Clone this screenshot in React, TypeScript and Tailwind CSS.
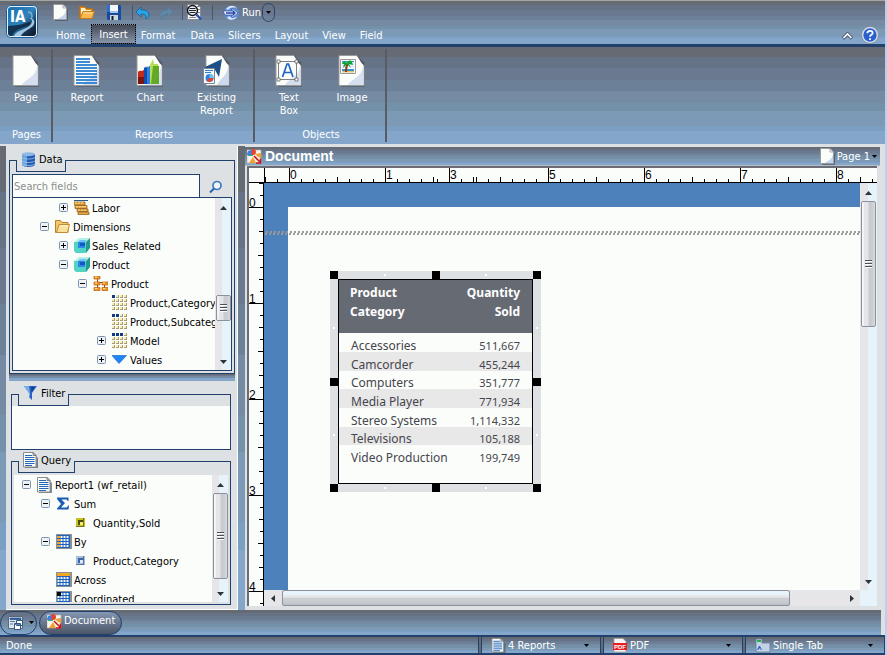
import type { ReactNode } from "react";

const BANDS =
  "bg-[linear-gradient(to_bottom,#666a72_0_10%,#667386_10%_22%,#6b7990_22%_34%,#6c8197_34%_45%,#758ba3_45%_58%,#7391a9_58%_66%,#7c9ab6_66%_81%,#7a9fc3_81%_87%,#84a6ca_87%_100%)]";

/* ---------- icons ---------- */

function Sheet({ children }: { children?: ReactNode }) {
  return (
    <svg width="28" height="32" viewBox="0 0 28 32" aria-hidden="true">
      <path d="M3 2h18l6 7v23H3z" fill="#4c5563" opacity=".55" />
      <path d="M1 .5h17.5L26 8v22.5H1z" fill="#fbfdfb" stroke="#9a9a9a" />
      <path d="M10 30C15 22 23 24 25.500 10v20z" fill="#d5dfef" />
      <path d="M18.500 0 26.500 8v3l-3-3z" fill="#50555e" />
      <path d="M18.500.5v8H23z" fill="#fff" />
      {children}
    </svg>
  );
}

function ReportIcon() {
  return (
    <Sheet>
      <path
        d="M3 4h14M3 7h14M3 10h21M3 13h21M3 16h21M3 19h21M3 22h21M3 25h21M3 28h21"
        stroke="#2a7fd0"
        strokeWidth="2"
        shapeRendering="crispEdges"
        opacity=".9"
      />
    </Sheet>
  );
}

function ChartIcon() {
  return (
    <Sheet>
      <path d="M2 17l2-2h5v14H2z" fill="#c62a1e" />
      <path d="M2 22h7v7H2z" fill="#7c1410" />
      <path d="M8 13l2-2h5v18H8z" fill="#2f7fe0" />
      <path d="M8 13h3v16H8z" fill="#0d4fae" />
      <path d="M14 10l3-6 1 5h4v20h-8z" fill="#b4de5a" />
      <path d="M17 11h6v18h-8z" fill="#63a826" />
      <path d="M3 15h4v1H3zM9 11h4v1H9z" fill="#f0d8c8" />
    </Sheet>
  );
}

function ExistingIcon() {
  return (
    <svg width="28" height="32" viewBox="0 0 28 32" aria-hidden="true">
      <path d="M5 2h16l6 7v23H5z" fill="#4c5563" opacity=".55" />
      <path d="M3 .5h15.500L26 8v22.500H3z" fill="#fbfdfb" stroke="#9a9a9a" />
      <path d="M14 30C18 22 24 22 25.500 10v20z" fill="#cddaee" />
      <path d="M18.500 0 26.500 8v3l-3-3z" fill="#50555e" />
      <path d="M2 12 19 4l-3 18-4-7-7 2z" fill="#1d4f86" />
      <path d="M.5 13.500h11v15H.5z" fill="#f4f8fb" stroke="#7b8694" />
      <path d="M2 15.500h8M2 17.500h6" stroke="#2f80cc" />
      <circle cx="6.500" cy="23" r="4" fill="#2f7fe0" />
      <path d="M6.500 23V19a4 4 0 0 1 4 4z" fill="#6fc3ef" />
      <path d="M6.500 23h4a4 4 0 0 1-7 2.500z" fill="#e0442a" />
    </svg>
  );
}

function TextBoxIcon() {
  return (
    <Sheet>
      <path d="M3.500 6.500h18v18h-18z" fill="none" stroke="#7f7f7f" />
      <path d="M2 5h3v3H2zM20 5h3v3h-3zM2 23h3v3H2zM20 23h3v3h-3z" fill="#fff" stroke="#666" strokeWidth=".8" />
      <path d="M7.500 22 12 9h1.500L18 22M9 17.500h7.500" fill="none" stroke="#1f62c4" strokeWidth="1.700" />
    </Sheet>
  );
}

function PictureIcon() {
  return (
    <Sheet>
      <path d="M2.500 4.500h15v14h-15z" fill="#fff" stroke="#9a9a9a" />
      <path d="M4 6h12v7H4z" fill="#dff0fa" />
      <path d="M4 6h12v1H4zM4 14h12v2H4z" fill="#2f95d8" />
      <path d="M4 16h12v1.500H4z" fill="#e3c267" />
      <path d="M8 17c0-4 .5-6 1.500-9" fill="none" stroke="#8d3d15" strokeWidth="2.200" />
      <path d="M4 9c1-3 3-3 5-1 1-3 4-3 5-1l1 3-4-1 2 4-4-4-4 4 1-4z" fill="#12a238" />
    </Sheet>
  );
}

function AppLogo() {
  return (
    <svg width="33" height="34" viewBox="0 0 33 34" aria-hidden="true">
      <defs>
        <linearGradient id="logo" x1="0" y1="0" x2="1" y2="1">
          <stop offset="0" stopColor="#1c6fae" />
          <stop offset=".5" stopColor="#2e83bd" />
          <stop offset=".75" stopColor="#173554" />
          <stop offset="1" stopColor="#0a1727" />
        </linearGradient>
      </defs>
      <rect x=".5" y=".5" width="31" height="32" rx="4" fill="#e8eff5" stroke="#1d5b96" />
      <rect x="2" y="2" width="28" height="29" rx="3" fill="url(#logo)" />
      <path d="M2 21c7-1 13-1 18-3 4-2 6 0 3 2-6 3-14 4-17 11H5c-2 0-3-1-3-3z" fill="#0d2136" opacity=".8" />
      <path d="M8 31c2-6 14-7 17-12 2-3 1-5-2-6 5 0 7 4 4 8-4 4-10 5-12 10z" fill="#9fc4df" />
      <path d="M22 7c4 0 5 4 3 7" fill="none" stroke="#7db1d6" strokeWidth="1.500" />
      <text x="4" y="17" fontSize="15" fontWeight="700" fill="#fff" className="font-['DejaVu_Sans_Condensed','Noto_Sans',sans-serif]">
        IA
      </text>
    </svg>
  );
}

function MiniPage() {
  return (
    <svg width="15" height="17" viewBox="0 0 15 17" aria-hidden="true">
      <path d="M2 2h9l4 4v11H2z" fill="#3f4a5a" opacity=".6" />
      <path d="M.5.5h9.500l3.500 3.500v11.500H.5z" fill="#fbfdfb" stroke="#9c9c9c" />
      <path d="M5 15c3-3 7-3 8-9v9z" fill="#c4d6ee" />
      <path d="M10 .5V4h3.500z" fill="#fff" stroke="#777" strokeWidth=".6" />
    </svg>
  );
}

function LinesPage({ tall = false }: { tall?: boolean }) {
  return (
    <svg width="15" height={tall ? 16 : 15} viewBox="0 0 15 16" aria-hidden="true">
      <path d="M2 2h9l4 4v10H2z" fill="#4f5866" opacity=".7" />
      <path d="M.5.5h9.500l3 3v11.500H.5z" fill="#fbfdfb" stroke="#8c8c8c" />
      <path d="M2 3.500h7M2 5.500h9.500M2 7.500h9.500M2 9.500h9.500M2 11.500h9.500M2 13.500h7" stroke="#2468b8" />
      <path d="M10 .5v3h3z" fill="#d8dde3" stroke="#555" strokeWidth=".7" />
    </svg>
  );
}

function OpenFolder() {
  return (
    <svg width="16" height="15" viewBox="0 0 16 15" aria-hidden="true">
      <path d="M.5 1.500h5l1.500 2h6.500v10H.5z" fill="#d98a1c" stroke="#b86f12" />
      <path d="M2 3h4l1 2h5v2H4l-2 5z" fill="#fff2c4" />
      <path d="M1 13.500 4 6.500h11.500l-2.500 7z" fill="#fbb850" stroke="#c57d18" />
      <path d="M4.800 8h8.700" stroke="#ffe2a3" />
    </svg>
  );
}

function TreeFolder() {
  return (
    <svg width="15" height="15" viewBox="0 0 15 15" aria-hidden="true">
      <path d="M.5 1.500h5l1.500 2h6v10H.5z" fill="#f1c66c" stroke="#b9812a" />
      <path d="M1.500 13.500 4 5.500h10.500l-2 8z" fill="#fbe09a" stroke="#c48c34" />
      <path d="M5 7h8" stroke="#fff6d6" />
    </svg>
  );
}

function SaveIcon() {
  return (
    <svg width="14" height="15" viewBox="0 0 14 15" aria-hidden="true">
      <path d="M0 0h13l1 1v14H1L0 14z" fill="#174a9c" />
      <path d="M0 0h3v7H0z" fill="#2f6fcf" />
      <path d="M3 0h8v7H3z" fill="#f4f8fb" />
      <path d="M3 6h8v2H3z" fill="#9fc3ea" />
      <path d="M3 10h8v5H3z" fill="#cfd5dc" />
      <path d="M4.500 11h2v4h-2z" fill="#111c33" />
    </svg>
  );
}

function UndoIcon({ faded = false }: { faded?: boolean }) {
  return (
    <svg width="14" height="12" viewBox="0 0 14 12" aria-hidden="true" className={faded ? "-scale-x-100" : ""}>
      <path
        d="M5 0v3c5-.5 8 2 8 5 0 2-1 3.500-3.500 4C11 9 9.500 7 5 7v3L0 5z"
        fill={faded ? "#5f87a8" : "#29a3e6"}
        stroke={faded ? "#587a98" : "#0c5c98"}
        strokeWidth=".7"
      />
    </svg>
  );
}

function PreviewIcon() {
  return (
    <svg width="17" height="17" viewBox="0 0 17 17" aria-hidden="true">
      <path d="M1.500.5h10l3 3v12h-13z" fill="#f8fafb" stroke="#8a8a8a" />
      <path d="M11 2.500h2M12 5.500h2M12 8.500h2M3 13.500h7" stroke="#888" />
      <circle cx="6.500" cy="6.500" r="5" fill="#e6f1f8" stroke="#10131a" strokeWidth="1.400" />
      <path d="M3.500 4.500h6M3 6.500h7M3.500 8.500h6" stroke="#222" />
      <path d="m10.500 10.500 4.500 5" stroke="#264fb4" strokeWidth="2.400" />
    </svg>
  );
}

function RunIcon() {
  return (
    <svg width="17" height="16" viewBox="0 0 17 16" aria-hidden="true" className="shrink-0">
      <ellipse cx="8.500" cy="8" rx="7.500" ry="7" fill="#5d8fdc" />
      <path d="M3 4c3-4 8-4 11-1-4-1-7-.5-9 2zM4 13c3 3 8 2 10-1-3 1-6 1-8-1z" fill="#d3e4fa" />
      <path d="M0 6h9V3l6 5-6 5v-3H2z" fill="#f0f5fc" stroke="#2a4c9f" strokeWidth=".7" />
      <path d="M3 8h8M9.500 5.500 12 8l-2.500 2.500" fill="none" stroke="#2340a8" strokeWidth="1.400" />
    </svg>
  );
}

function HelpIcon() {
  return (
    <svg width="18" height="18" viewBox="0 0 17 17" aria-hidden="true">
      <circle cx="8.500" cy="8.500" r="8" fill="#dfe5ee" stroke="#7b8798" strokeWidth=".8" />
      <circle cx="8.500" cy="8.500" r="6.300" fill="#2b5fd0" />
      <path d="M6 6.800c0-3 5-3 5-.3 0 1.800-2.500 1.700-2.500 3.700M8.500 11.600v1.600" fill="none" stroke="#fff" strokeWidth="1.700" />
    </svg>
  );
}

function DocIcon() {
  return (
    <svg width="15" height="15" viewBox="0 0 15 15" aria-hidden="true">
      <path d="M0 1h14v13H0z" fill="#f7f3ea" stroke="#b9b2a4" strokeWidth=".6" />
      <path d="m2 14 4-6 3 6zM8 5l6-1v5l-3-1z" fill="#f0a02c" />
      <path d="M0 4a4 4 0 0 1 6 3H1z" fill="#2dad72" />
      <circle cx="6" cy="3" r="3" fill="#e6432c" />
      <path d="M1 2 5 1 4 6H0z" fill="#3d82e0" />
      <path d="m7 7 6 6M13.500 9.500v4.500H9" fill="none" stroke="#c4181c" strokeWidth="1.600" />
    </svg>
  );
}

function DatabaseIcon() {
  return (
    <svg width="15" height="15" viewBox="0 0 15 15" aria-hidden="true">
      <path d="M1 2v11c2 2.500 11 2.500 13 0V2z" fill="#1f5bb4" />
      <path d="M1 2v11c1 1 3 1.700 5 1.800V2z" fill="#69a4de" />
      <path d="M1 5.500c3 2 10 2 13 0M1 9c3 2 10 2 13 0M1 12c3 2 10 2 13 0" fill="none" stroke="#a9c9ea" strokeWidth=".8" />
      <ellipse cx="7.500" cy="2.200" rx="6.500" ry="2" fill="#8fb9e4" />
    </svg>
  );
}

function FunnelIcon() {
  return (
    <svg width="15" height="16" viewBox="0 0 15 16" aria-hidden="true">
      <path d="M1 1h13L9 8v7l-3-3V8z" fill="#2a62c0" />
      <path d="M1 1h5l1 7v4l-1-1V8z" fill="#78aeea" />
      <path d="M8 2h4L8.500 7z" fill="#123f92" />
    </svg>
  );
}

function LensIcon() {
  return (
    <svg width="14" height="14" viewBox="0 0 14 14" aria-hidden="true">
      <circle cx="8" cy="5.500" r="4" fill="#eef5fb" stroke="#3d78bd" strokeWidth="1.700" />
      <path d="M5 8.500 1 12.500" stroke="#2f66aa" strokeWidth="2.200" />
    </svg>
  );
}

function LaborIcon() {
  return (
    <svg width="16" height="15" viewBox="0 0 16 15" aria-hidden="true">
      <path d="M0 .5h14" stroke="#275a8c" />
      <path d="M0 2h11v3H0zM1 5.500h12v3H1zM3 9h11v2.500H3zM4 12h11v2.500H4z" fill="#e8aa42" stroke="#8a5413" strokeWidth=".7" />
      <path d="M1 3h9M2 6.500h10M4 10h9" stroke="#fbdc92" strokeDasharray="2 1" />
    </svg>
  );
}

function CubeIcon() {
  return (
    <svg width="16" height="15" viewBox="0 0 16 15" aria-hidden="true">
      <path d="M0 4 5 0h11l-4 4z" fill="#b4f0e6" />
      <path d="M12 4l4-4v10l-4 5z" fill="#1f9c90" />
      <path d="M0 4h12v11H2l-2-2z" fill="#52d3c4" />
      <path d="M4 4h7v6H4z" fill="#2b86ea" />
      <path d="M6 5h5v3H6z" fill="#1556c0" />
      <path d="M4 4 6 2h7l-2 2z" fill="#6fc0f4" />
    </svg>
  );
}

function HierarchyIcon() {
  return (
    <svg width="15" height="15" viewBox="0 0 15 15" aria-hidden="true">
      <path d="M4.500 2v11M4.500 6.500h7v7" fill="none" stroke="#7a4c1a" />
      <path d="M1 0h6v3H1zM1 6h6v3H1zM1 11.500h6v3H1zM9 6h6v3H9zM9 11.500h6v3H9z" fill="#f29a22" stroke="#b85a10" strokeWidth=".7" />
      <path d="M2 1h2M2 7h2M2 12.500h2M10 7h2M10 12.500h2" stroke="#ffe69a" />
    </svg>
  );
}

function DotGrid({ marked = 0 }: { marked?: number }) {
  const cells = Array.from({ length: 16 }, (_, i) => i);
  return (
    <svg width="15" height="15" viewBox="0 0 15 15" aria-hidden="true">
      {cells.map((i) => (
        <g key={i}>
          <rect x={(i % 4) * 4} y={Math.floor(i / 4) * 4} width="3" height="3" fill={i < marked ? "#123a80" : "#a89c74"} />
          {i >= marked && <rect x={(i % 4) * 4} y={Math.floor(i / 4) * 4} width="2" height="2" fill="#f7efb4" />}
        </g>
      ))}
    </svg>
  );
}

function ValuesIcon() {
  return (
    <svg width="15" height="15" viewBox="0 0 15 15" aria-hidden="true">
      <path d="M0 3.500h14.500L7 11.500z" fill="#1b86f8" stroke="#1258b8" strokeWidth=".6" />
    </svg>
  );
}

function SigmaIcon() {
  return (
    <svg width="15" height="15" viewBox="0 0 15 15" aria-hidden="true">
      <path d="M1 1.500h11.500V5h-1c0-1-.5-1.500-2-1.500H5.500L9 7l-4 4.500h4.500c1.500 0 2-.5 2.500-2h1l-.5 4H1v-1L5 8 1 3z" fill="#1c5cb4" />
    </svg>
  );
}

function Bullet({ tone }: { tone: "gold" | "blue" }) {
  return (
    <svg width="15" height="15" viewBox="0 0 15 15" aria-hidden="true">
      <path d="M1 3h9v9H1z" fill={tone === "gold" ? "#c8c21a" : "#a9bdd8"} />
      <path d="M9 3v9H1v-1h7V3z" fill={tone === "gold" ? "#77711a" : "#56719a"} />
      <path d="M3 5h5v5H3z" fill={tone === "gold" ? "#4b4a12" : "#3c6aa8"} />
      <path d="M5 7h3v3H5z" fill={tone === "gold" ? "#f4ef6c" : "#dbe8f6"} />
    </svg>
  );
}

function TableIcon({ kind }: { kind: "by" | "across" | "coord" }) {
  return (
    <svg width="16" height="15" viewBox="0 0 16 15" aria-hidden="true">
      <path d="M0 0h16v15H0z" fill="#8b8f96" />
      <path d="M1 1h13v13H1z" fill="#1f62bd" />
      {[0, 1, 2, 3].map((r) => (
        <path key={r} d={`M1.500 ${r * 3 + 3}h12`} stroke="#eef5fb" strokeWidth="1.800" strokeDasharray="2 1" />
      ))}
      {kind === "by" && <path d="M1.500 3h3M1.500 6h3M1.500 9h3M1.500 12h3" stroke="#f5a623" strokeWidth="2" />}
      {kind === "across" && <path d="M1 1h13v3H1z" fill="#f5a623" />}
      {kind === "coord" && <path d="M1 1h4v4H1z" fill="#0b0b0b" />}
    </svg>
  );
}

function Caret() {
  return (
    <svg width="5" height="3" viewBox="0 0 5 3" aria-hidden="true" className="pointer-events-none">
      <path d="M0 0h5L2.500 3z" fill="#000" />
    </svg>
  );
}

function PdfIcon() {
  return (
    <svg width="15" height="15" viewBox="0 0 15 15" aria-hidden="true">
      <path d="M1 .5h9l3 3V14H1z" fill="#f8f6f6" stroke="#9c9c9c" strokeWidth=".8" />
      <path d="M0 5h14v7H0z" fill="#e81c1c" />
      <text x="1" y="11" fontSize="6" fontWeight="700" fill="#fff" className="font-['Liberation_Sans',sans-serif]">
        PDF
      </text>
    </svg>
  );
}

function TabIcon() {
  return (
    <svg width="16" height="15" viewBox="0 0 16 15" aria-hidden="true">
      <path d="M1 1h6v4h8v9H1z" fill="#c2d3e6" stroke="#6c7c90" strokeWidth=".8" />
      <path d="M2 2h4v2H2z" fill="#1fb44b" />
      <path d="M2 12l2-4h1l2 4H6l-1-2-2 2z" fill="#2b62c0" />
    </svg>
  );
}

function WindowsIcon() {
  return (
    <svg width="17" height="16" viewBox="0 0 17 16" aria-hidden="true">
      <path d="M.5 1.500h14v12H.5z" fill="#dfe6ee" stroke="#58687c" />
      <path d="M2 3h11v1.500H2zM2 6.500h5M2 9h3" fill="#2f5c94" stroke="#2f5c94" strokeWidth=".8" />
      <path d="M8.500 5.500h6v5h-6zM6.500 8.500h6v6h-6z" fill="#fff" stroke="#33557f" />
      <path d="M7 9.500h5" stroke="#5d86b8" />
    </svg>
  );
}

/* ---------- scrollbars ---------- */

function VScroll({ before, thumb, wide = false }: { before: string; thumb: string; wide?: boolean }) {
  return (
    <div
      className={`flex shrink-0 flex-col items-center bg-[linear-gradient(to_right,#e6e6e8_0_45%,#e6f3fb_45%_100%)] ${wide ? "w-[17px] px-px" : "w-4"}`}
    >
      <div className={`flex w-full shrink-0 justify-center pt-2 ${before}`}>
        <svg width="7" height="4" viewBox="0 0 7 4" aria-hidden="true">
          <path d="M3.500 0 7 4H0z" fill="#2e343c" />
        </svg>
      </div>
      <div
        className={`flex w-[15px] shrink-0 items-center justify-center rounded-xs border border-[#8d9199] bg-[linear-gradient(to_right,#f4f4f6_0_15%,#e4e5e8_15%_45%,#c9cbcf_55%_75%,#dadbde)] ${thumb}`}
      >
        <svg width="7" height="8" viewBox="0 0 7 8" aria-hidden="true">
          <path d="M0 .5h7M0 3.500h7M0 6.500h7" stroke="#4a5058" />
          <path d="M0 1.500h7M0 4.500h7M0 7.500h7" stroke="#fff" />
        </svg>
      </div>
      <div className="flex w-full flex-1 items-end justify-center pb-[6px]">
        <svg width="7" height="4" viewBox="0 0 7 4" aria-hidden="true">
          <path d="M0 0h7L3.500 4z" fill="#2e343c" />
        </svg>
      </div>
    </div>
  );
}

function HScroll() {
  return (
    <div className="flex h-4 bg-[#e6e6e8]">
      <div className="flex w-[18px] items-center justify-center">
        <svg width="4" height="7" viewBox="0 0 4 7" aria-hidden="true">
          <path d="M4 0v7L0 3.500z" fill="#2e343c" />
        </svg>
      </div>
      <div className="w-[508px] rounded-xs border border-[#8d9199] bg-[linear-gradient(to_bottom,#e8f4fb_0_30%,#e6e6e8_30%_45%,#cbcdd0_50%_75%,#b9bfc8)]" />
      <div className="flex flex-1 items-center justify-end pr-[6px]">
        <svg width="4" height="7" viewBox="0 0 4 7" aria-hidden="true">
          <path d="M0 0v7l4-3.500z" fill="#2e343c" />
        </svg>
      </div>
      <div className="w-[17px] bg-[#e6f3fb]" />
    </div>
  );
}

/* ---------- top area ---------- */

const tabs = ["Home", "Insert", "Format", "Data", "Slicers", "Layout", "View", "Field"];

function Separator() {
  return <span className="h-[15px] w-px bg-[#4d5563]" />;
}

function Header() {
  return (
    <header className={`flex h-[47px] shrink-0 border-t border-b-[3px] border-t-[#a3a5a3] border-b-[#21406b] ${BANDS}`}>
      <button aria-label="InfoAssist menu" className="ml-[6px] mt-1 h-[34px] w-[33px]">
        <AppLogo />
      </button>
      <div className="flex flex-1 flex-col pl-2">
        <div className="flex h-6 items-center">
          <button aria-label="New" className="flex w-[27px] justify-center"><MiniPage /></button>
          <button aria-label="Open" className="flex w-[25px] justify-center"><OpenFolder /></button>
          <button aria-label="Save" className="mr-1 flex w-[29px] justify-center"><SaveIcon /></button>
          <Separator />
          <button aria-label="Undo" className="flex w-5 justify-center"><UndoIcon /></button>
          <button aria-label="Redo" className="mr-[3px] flex w-[26px] justify-center"><UndoIcon faded /></button>
          <Separator />
          <button aria-label="Preview" className="mr-[6px] flex w-[23px] justify-center"><PreviewIcon /></button>
          <Separator />
          <button className="ml-[10px] flex w-[39px] items-center gap-[2px]"><RunIcon /><span className="pt-px">Run</span></button>
          <button aria-label="Run options" className="flex h-[19px] w-[13px] items-center justify-center rounded-full border border-[#2a4468]">
            <Caret />
          </button>
        </div>
        <nav className="flex items-end" aria-label="Ribbon tabs">
          {tabs.map((t) =>
            t === "Insert" ? (
              <button key={t} aria-current="page" className="h-5 border border-dotted border-black bg-linear-to-b from-[#454b58] to-[#8794a9] px-[7px] pt-px leading-[18px]">
                {t}
              </button>
            ) : (
              <button key={t} className={`h-5 pt-[3px] leading-[17px] ${t === "Home" ? "pl-[9px] pr-[6px]" : t === "Format" ? "pl-[5px] pr-2" : "px-[7px]"}`}>
                {t}
              </button>
            ),
          )}
        </nav>
      </div>
      <div className="flex items-end gap-2 pr-[6px]">
        <button aria-label="Collapse ribbon" className="mb-1">
          <svg width="11" height="8" viewBox="0 0 11 8" aria-hidden="true">
            <path d="m1 6.500 4.500-4.500L10 6.500" fill="none" stroke="#4d5a6c" strokeWidth="3.400" />
            <path d="m1.500 6 4-4 4 4" fill="none" stroke="#fff" strokeWidth="1.600" />
          </svg>
        </button>
        <button aria-label="Help"><HelpIcon /></button>
      </div>
    </header>
  );
}

function RibbonButton({ icon, label, width }: { icon: ReactNode; label: string; width: string }) {
  return (
    <button className={`flex flex-col items-center text-center leading-[13px] ${width}`}>
      {icon}
      <span className="mt-1 whitespace-pre-line">{label}</span>
    </button>
  );
}

function RibbonGroup({ title, width, children }: { title: string; width: string; children: ReactNode }) {
  return (
    <section className={`my-[2px] flex shrink-0 flex-col border-r-2 border-[#575c67] ${width}`}>
      <div className="flex flex-1 items-start pl-px pt-[6px]">{children}</div>
      <h2 className="pl-[2px] text-center leading-[14px]">{title}</h2>
    </section>
  );
}

function Ribbon() {
  return (
    <div className={`flex h-[97px] shrink-0 ${BANDS}`}>
      <RibbonGroup title="Pages" width="w-[53px]">
        <RibbonButton icon={<Sheet />} label="Page" width="w-full" />
      </RibbonGroup>
      <RibbonGroup title="Reports" width="w-[202px]">
        <RibbonButton icon={<ReportIcon />} label="Report" width="w-[66px]" />
        <RibbonButton icon={<ChartIcon />} label="Chart" width="w-[60px]" />
        <RibbonButton icon={<ExistingIcon />} label={"Existing\nReport"} width="w-[73px]" />
      </RibbonGroup>
      <RibbonGroup title="Objects" width="w-[132px]">
        <RibbonButton icon={<TextBoxIcon />} label={"Text\nBox"} width="w-[66px]" />
        <RibbonButton icon={<PictureIcon />} label="Image" width="w-[60px]" />
      </RibbonGroup>
    </div>
  );
}

/* ---------- left side ---------- */

const INDENTS = ["pl-[8px]", "pl-[27px]", "pl-[46px]", "pl-[65px]", "pl-[84px]"];

type Node = { level: number; icon: ReactNode; label: string; state?: "open" | "closed" };

function TreeRow({ level, icon, label, state }: Node) {
  return (
    <li className={`flex h-[19px] items-center whitespace-nowrap ${INDENTS[level]}`}>
      {state ? (
        <button aria-label={`${state === "open" ? "Collapse" : "Expand"} ${label}`} className="w-[9px] shrink-0">
          <svg width="9" height="9" viewBox="0 0 9 9" aria-hidden="true">
            <rect x=".5" y=".5" width="8" height="8" rx="1" fill="#eef2f5" stroke="#7d93b0" />
            <path d={state === "open" ? "M2 4.500h5" : "M2 4.500h5M4.500 2v5"} stroke="#000" />
          </svg>
        </button>
      ) : (
        <span className="w-[9px] shrink-0" />
      )}
      <span className="ml-[6px] flex w-4 shrink-0">{icon}</span>
      <span className="ml-[2px] pt-[2px]">{label}</span>
    </li>
  );
}

const fields: Node[] = [
  { level: 2, icon: <LaborIcon />, label: "Labor", state: "closed" },
  { level: 1, icon: <TreeFolder />, label: "Dimensions", state: "open" },
  { level: 2, icon: <CubeIcon />, label: "Sales_Related", state: "closed" },
  { level: 2, icon: <CubeIcon />, label: "Product", state: "open" },
  { level: 3, icon: <HierarchyIcon />, label: "Product", state: "open" },
  { level: 4, icon: <DotGrid marked={1} />, label: "Product,Category" },
  { level: 4, icon: <DotGrid marked={2} />, label: "Product,Subcategory" },
  { level: 4, icon: <DotGrid marked={3} />, label: "Model", state: "closed" },
  { level: 4, icon: <ValuesIcon />, label: "Values", state: "closed" },
];

const query: Node[] = [
  { level: 0, icon: <LinesPage tall />, label: "Report1 (wf_retail)", state: "open" },
  { level: 1, icon: <SigmaIcon />, label: "Sum", state: "open" },
  { level: 2, icon: <Bullet tone="gold" />, label: "Quantity,Sold" },
  { level: 1, icon: <TableIcon kind="by" />, label: "By", state: "open" },
  { level: 2, icon: <Bullet tone="blue" />, label: "Product,Category" },
  { level: 1, icon: <TableIcon kind="across" />, label: "Across" },
  { level: 1, icon: <TableIcon kind="coord" />, label: "Coordinated" },
];

function PanelTab({ icon, label, width }: { icon: ReactNode; label: string; width: string }) {
  return (
    <h2
      className={`-mt-px ml-[6px] flex h-3 shrink-0 items-end gap-[3px] border-x border-b border-[#21406b] bg-[#dde1e3] pb-1 pl-1 leading-[15px] ${width}`}
    >
      {icon}
      {label}
    </h2>
  );
}

function LeftPanel() {
  return (
    <aside className="flex w-[232px] shrink-0 flex-col border-b border-r border-[#fbfdfb] bg-[#dde1e3] pb-1 pl-[3px] pr-[2px] pt-[14px] text-black">
      <section className="flex h-[214px] shrink-0 flex-col border border-[#21406b] pb-[2px]">
        <PanelTab icon={<DatabaseIcon />} label="Data" width="w-[50px]" />
        <div className="mx-[2px] mt-[2px] flex h-[23px] shrink-0">
          <input
            aria-label="Search fields"
            placeholder="Search fields"
            className="w-[188px] border border-b-0 border-[#21406b] bg-[#fbfdfb] px-px pt-px placeholder:text-[#8c8f8c]"
          />
          <button aria-label="Search" className="flex flex-1 items-center justify-center pt-[2px]"><LensIcon /></button>
        </div>
        <div className="mx-[2px] flex min-h-0 flex-1 border border-[#21406b] bg-[#fbfdfb]">
          <ul className="min-w-0 flex-1 overflow-hidden">
            {fields.map((n, i) => <TreeRow key={i} {...n} />)}
          </ul>
          <VScroll before="h-[97px]" thumb="h-[26px]" />
        </div>
      </section>
      <div className="h-[7px] shrink-0 bg-[linear-gradient(to_bottom,#666a72_0_15%,#6b7990_15%_35%,#758ba3_35%_60%,#84a6ca_60%)]" />
      <section className="ml-[2px] mr-1 mt-[13px] flex h-[56px] shrink-0 flex-col border border-[#21406b]">
        <PanelTab icon={<FunnelIcon />} label="Filter" width="w-[51px]" />
        <div className="flex-1 bg-[#fbfdfb]" />
      </section>
      <section className="ml-[2px] mr-1 mt-[11px] flex min-h-0 flex-1 flex-col border border-[#21406b] pb-[2px]">
        <PanelTab icon={<LinesPage tall />} label="Query" width="w-[57px]" />
        <div className="mx-[2px] mt-[2px] flex min-h-0 flex-1 bg-[#fbfdfb]">
          <ul className="min-w-0 flex-1 overflow-hidden">
            {query.map((n, i) => <TreeRow key={i} {...n} />)}
          </ul>
          <VScroll before="h-[18px]" thumb="h-[86px]" />
        </div>
      </section>
    </aside>
  );
}

/* ---------- document ---------- */

const majors: [number, string][] = [[40, "0"], [136, "1"], [200, "3"], [299, "5"], [395, "6"], [491, "7"], [587, "8"]];
const smallTicks = [
  28, 52, 64, 76, 100, 112, 124, 148, 160, 172, 188, 212, 239, 263, 275, 287, 311, 323, 335, 359, 371, 383, 407, 419, 431, 455, 467, 479,
  503, 515, 527, 551, 563, 575, 599, 623,
];
const midTicks = [16, 88, 184, 224, 227, 251, 347, 443, 539, 611];
const vMajors: [number, string][] = [[24, "0"], [120, "1"], [216, "2"], [312, "3"], [408, "4"]];

function TopRuler() {
  return (
    <svg className="h-[15px] w-full shrink-0 bg-[#fbfdfb] font-['Liberation_Sans',sans-serif]" aria-hidden="true" shapeRendering="crispEdges">
      {majors.map(([x, n]) => (
        <g key={n}>
          <path d={`M${x + 0.5} 0v14`} stroke="#000" />
          <text x={x + 1} y="11" fontSize="12">{n}</text>
        </g>
      ))}
      <path d="M15.500 0v14" stroke="#000" />
      {smallTicks.map((x) => <path key={x} d={`M${x + 0.5} 11v3`} stroke="#000" />)}
      {midTicks.map((x) => <path key={x} d={`M${x + 0.5} 9v5`} stroke="#000" />)}
      <rect y="14" width="100%" height="1" />
    </svg>
  );
}

function SideRuler() {
  const ticks = Array.from({ length: 36 }, (_, i) => i * 12).filter((y) => y % 96 !== 24);
  return (
    <svg className="h-full w-[15px] shrink-0 bg-[#fbfdfb] font-['Liberation_Sans',sans-serif]" aria-hidden="true" shapeRendering="crispEdges">
      {vMajors.map(([y, n]) => (
        <g key={n}>
          <path d={`M0 ${y + 0.5}h14`} stroke="#000" />
          <text x="0" y={y} fontSize="12">{n}</text>
        </g>
      ))}
      {ticks.map((y) => (
        <path key={y} d={`M${y % 96 === 72 ? 9 : y % 24 === 0 ? 10 : 11} ${y + 0.5}h5`} stroke="#000" />
      ))}
      <rect x="14" width="1" height="100%" />
    </svg>
  );
}

const rows = [
  ["Accessories", "511,667"],
  ["Camcorder", "455,244"],
  ["Computers", "351,777"],
  ["Media Player", "771,934"],
  ["Stereo Systems", "1,114,332"],
  ["Televisions", "105,188"],
  ["Video Production", "199,749"],
];

const handles = [
  "left-0 top-0",
  "left-[102px] top-0",
  "right-0 top-0",
  "left-0 top-[107px]",
  "right-0 top-[107px]",
  "left-0 bottom-0",
  "left-[102px] bottom-0",
  "right-0 bottom-0",
];

const dots = [
  "left-[54px] top-[3px]",
  "left-[155px] top-[3px]",
  "left-[54px] bottom-[3px]",
  "left-[155px] bottom-[3px]",
  "left-[3px] top-[56px]",
  "left-[3px] top-[163px]",
  "right-[3px] top-[56px]",
  "right-[3px] top-[163px]",
];

function SelectedReport() {
  return (
    <div className="absolute left-[66px] top-[88px] h-[221px] w-[211px] bg-[#dde1e3] p-2">
      {handles.map((h) => <span key={h} className={`absolute size-2 bg-black ${h}`} />)}
      {dots.map((d) => <span key={d} className={`absolute size-[2px] bg-white ${d}`} />)}
      <div className="h-full border border-black bg-[#fbfdfb] font-['Noto_Sans',sans-serif] text-xs text-[#45454d]">
        <table className="w-full border-collapse">
          <thead>
            <tr className="h-[53px] bg-[#666a73] align-top text-white">
              <th className="pl-[11px] pt-[3px] text-left leading-[19px] font-bold">Product<br />Category</th>
              <th className="pr-3 pt-[3px] text-right leading-[19px] font-bold">Quantity<br />Sold</th>
            </tr>
          </thead>
          <tbody>
            {rows.map(([name, qty]) => (
              <tr key={name} className="h-[19px] align-bottom even:bg-[#e8e8e8] nth-[3n]:h-[18px]">
                <td className="p-0 pl-3 leading-[12px] whitespace-nowrap">{name}</td>
                <td className="p-0 pr-3 text-right text-[11px] leading-[12px]">{qty}</td>
              </tr>
            ))}
          </tbody>
        </table>
      </div>
    </div>
  );
}

function DocumentPanel() {
  return (
    <main className="flex min-w-0 flex-1 flex-col bg-[#dde1e3] pr-[5px] pt-px">
      <div className={`flex h-[19px] shrink-0 items-center border-b border-[#b5bcc4] pl-[2px] ${BANDS}`}>
        <DocIcon />
        <h1 className="ml-[3px] flex-1 font-['Liberation_Sans',sans-serif] text-sm leading-[17px] font-bold">Document</h1>
        <button className="flex items-center gap-[2px] pr-[3px]">
          <MiniPage />
          <span className="pt-px">Page 1</span>
          <Caret />
        </button>
      </div>
      <div className="mb-1 ml-[2px] mr-[3px] flex min-h-0 flex-1 flex-col border-l-2 border-t-2 border-[#6a6d76] text-black">
        <TopRuler />
        <div className="flex min-h-0 flex-1">
          <SideRuler />
          <div className="flex min-w-0 flex-1 flex-col">
            <div className="flex min-h-0 flex-1">
              <div className="relative min-w-0 flex-1 overflow-hidden bg-[#4c81bb] pl-6 pt-6">
                <div className="h-full bg-[#fbfdfb]" />
                <div className="absolute inset-x-0 top-[48px] h-[2px] bg-[repeating-linear-gradient(to_right,transparent_0_2px,#9a9a9a_2px_4px)]" />
                <div className="absolute inset-x-0 top-[50px] h-[2px] bg-[repeating-linear-gradient(to_right,transparent_0_1px,#9a9a9a_1px_3px,transparent_3px_4px)]" />
                <SelectedReport />
              </div>
              <VScroll before="h-[18px]" thumb="h-[126px]" wide />
            </div>
            <HScroll />
          </div>
        </div>
      </div>
    </main>
  );
}

/* ---------- bottom bars ---------- */

function StatusSelect({ icon, label, value, width }: { icon: ReactNode; label: string; value: string; width: string }) {
  return (
    <div className={`flex shrink-0 items-center border-x border-[#21406b] pl-[9px] pr-[11px] ${BANDS} ${width}`}>
      {icon}
      <select aria-label={label} className="min-w-0 flex-1 appearance-none bg-transparent pl-[2px] pt-[2px] leading-[14px] outline-none">
        <option>{value}</option>
      </select>
      <Caret />
    </div>
  );
}

function BottomBars() {
  return (
    <footer className="shrink-0">
      <div className={`mr-1 flex h-[25px] items-center gap-[2px] ${BANDS}`}>
        <button aria-label="Windows" className="flex h-6 w-[37px] items-center justify-center gap-1 rounded-xl border border-[#21406b] pl-1">
          <WindowsIcon />
          <Caret />
        </button>
        <button className="flex h-6 items-center gap-[2px] rounded-xl border border-[#21406b] bg-linear-to-b from-[#8597b3] to-[#4c5667] pb-[3px] pl-[7px] pr-[6px]">
          <DocIcon />
          Document
        </button>
      </div>
      <div className="flex h-5 gap-[2px] border-b-2 border-t-2 border-[#21406b] bg-[#666a72]">
        <div className={`flex flex-1 items-center border-r border-[#21406b] pl-[6px] leading-[15px] ${BANDS}`}>Done</div>
        <StatusSelect icon={<LinesPage />} label="Reports" value="4 Reports" width="w-[120px]" />
        <StatusSelect icon={<PdfIcon />} label="Output format" value="PDF" width="w-[140px]" />
        <StatusSelect icon={<TabIcon />} label="Output target" value="Single Tab" width="w-[140px]" />
      </div>
    </footer>
  );
}

export default function App() {
  return (
    <div className="flex h-screen min-h-[600px] flex-col border-r-2 border-[#b8cfee] bg-[#dde1e3] font-['DejaVu_Sans_Condensed','Noto_Sans',sans-serif] text-[11px] leading-[14px] text-white">
      <Header />
      <Ribbon />
      <div className={`mt-[2px] flex min-h-0 flex-1 gap-[7px] pl-[6px] ${BANDS}`}>
        <LeftPanel />
        <DocumentPanel />
      </div>
      <BottomBars />
    </div>
  );
}
